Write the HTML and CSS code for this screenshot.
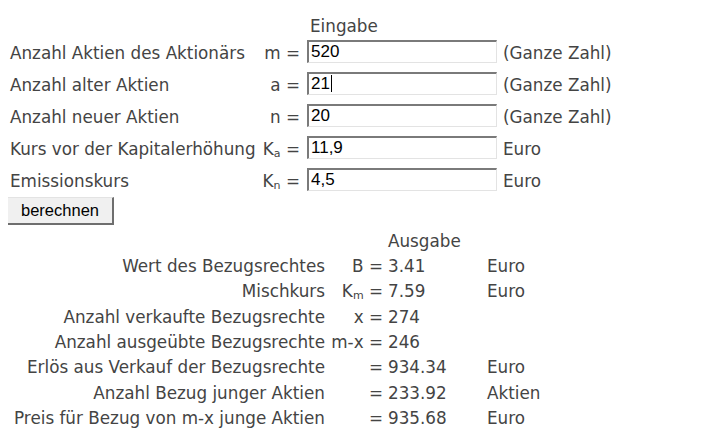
FILE: index.html
```html
<!DOCTYPE html>
<html lang="de">
<head>
<meta charset="utf-8">
<title>Bezugsrecht</title>
<link rel="stylesheet" href="styles.css">
</head>
<body>
<form class="page">
  <div class="inputs">
    <div></div><div></div><div class="head">Eingabe</div><div></div>

    <div class="lbl">Anzahl Aktien des Aktionärs</div>
    <div class="sym">m =</div>
    <input class="field" type="text" value="520">
    <div class="unit">(Ganze Zahl)</div>

    <div class="lbl">Anzahl alter Aktien</div>
    <div class="sym">a =</div>
    <div class="field focus">21<span class="caret"></span></div>
    <div class="unit">(Ganze Zahl)</div>

    <div class="lbl">Anzahl neuer Aktien</div>
    <div class="sym">n =</div>
    <input class="field" type="text" value="20">
    <div class="unit">(Ganze Zahl)</div>

    <div class="lbl">Kurs vor der Kapitalerhöhung</div>
    <div class="sym">K<sub>a</sub> =</div>
    <input class="field" type="text" value="11,9">
    <div class="unit">Euro</div>

    <div class="lbl">Emissionskurs</div>
    <div class="sym">K<sub>n</sub> =</div>
    <input class="field" type="text" value="4,5">
    <div class="unit">Euro</div>
  </div>

  <button class="btn" type="button">berechnen</button>

  <div class="outputs">
    <div></div><div></div><div class="head">Ausgabe</div><div></div>

    <div class="olbl">Wert des Bezugsrechtes</div>
    <div class="osym">B =</div>
    <div class="val">3.41</div>
    <div class="ounit">Euro</div>

    <div class="olbl">Mischkurs</div>
    <div class="osym">K<sub>m</sub> =</div>
    <div class="val">7.59</div>
    <div class="ounit">Euro</div>

    <div class="olbl">Anzahl verkaufte Bezugsrechte</div>
    <div class="osym">x =</div>
    <div class="val">274</div>
    <div class="ounit"></div>

    <div class="olbl">Anzahl ausgeübte Bezugsrechte</div>
    <div class="osym">m-x =</div>
    <div class="val">246</div>
    <div class="ounit"></div>

    <div class="olbl">Erlös aus Verkauf der Bezugsrechte</div>
    <div class="osym">=</div>
    <div class="val">934.34</div>
    <div class="ounit">Euro</div>

    <div class="olbl">Anzahl Bezug junger Aktien</div>
    <div class="osym">=</div>
    <div class="val">233.92</div>
    <div class="ounit">Aktien</div>

    <div class="olbl">Preis für Bezug von m-x junge Aktien</div>
    <div class="osym">=</div>
    <div class="val">935.68</div>
    <div class="ounit">Euro</div>
  </div>
</form>
</body>
</html>
```
FILE: styles.css
```css
html, body {
  margin: 0;
  padding: 0;
  background: #ffffff;
}
body {
  margin: 8px;
  font-family: "DejaVu Sans", Verdana, sans-serif;
  font-size: 16.8px;
  color: #444444;
}
.page {
  margin: 0;
}
.inputs {
  display: grid;
  grid-template-columns: 248px 42px 190px auto;
  grid-template-rows: 20px;
  grid-auto-rows: 32px;
  justify-content: start;
  align-items: center;
  padding: 7px 0 0 2px;
}
.inputs .head {
  line-height: 20px;
  padding-left: 10px;
  padding-top: 1px;
}
.lbl,
.sym,
.unit {
  white-space: nowrap;
  padding-top: 4px;
}
.sym {
  text-align: right;
}
sub {
  font-size: 11px;
  vertical-align: -2px;
  line-height: 0;
}
.field {
  box-sizing: border-box;
  width: 190px;
  height: 23px;
  margin: 0 0 0 7px;
  padding: 0 2px;
  font-family: "Liberation Sans", Arial, sans-serif;
  font-size: 17px;
  color: #000000;
  line-height: 19px;
  background: #ffffff;
  border-style: solid;
  border-width: 2px 1px 1px 2px;
  border-color: #7a7a7a #e3e3e3 #e3e3e3 #7a7a7a;
  outline: none;
}
.focus {
  display: flex;
  align-items: center;
}
.caret {
  display: inline-block;
  width: 1px;
  height: 17px;
  background: #000;
  margin-left: 1px;
}
.unit {
  margin-left: 13px;
}
.btn {
  display: block;
  box-sizing: border-box;
  width: 107px;
  height: 28px;
  margin: 2px 0 0 -1px;
  padding: 0;
  font-family: "Liberation Sans", Arial, sans-serif;
  font-size: 16.5px;
  color: #000;
  background: #f0f0f0;
  border-style: solid;
  border-width: 1px 2px 2px 1px;
  border-color: #e3e3e3 #6e6e6e #6e6e6e #e3e3e3;
}
.outputs {
  display: grid;
  grid-template-columns: 314px 58px 104px auto;
  grid-auto-rows: 25.33px;
  justify-content: start;
  align-items: center;
  padding: 3px 0 0 3px;
}
.olbl {
  text-align: right;
  white-space: nowrap;
}
.osym {
  text-align: right;
  white-space: nowrap;
}
.val {
  padding-left: 5px;
  white-space: nowrap;
}
.outputs .head {
  padding-left: 5px;
}
.ounit {
  white-space: nowrap;
}
```
